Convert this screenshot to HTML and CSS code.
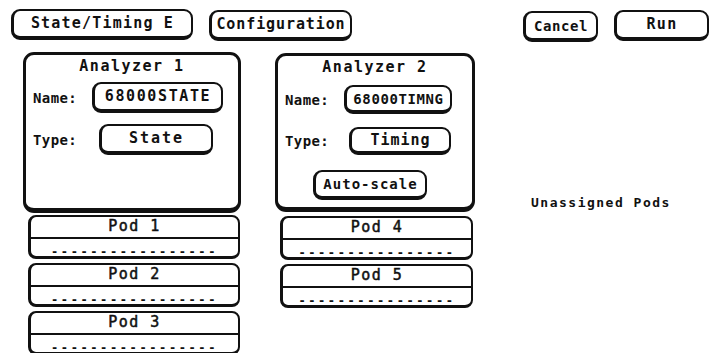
FILE: index.html
```html
<!DOCTYPE html>
<html>
<head>
<meta charset="utf-8">
<link rel="stylesheet" href="styles.css">
</head>
<body>
<div class="topbar">
  <div class="btn btn-mode">State/Timing E</div>
  <div class="btn btn-config">Configuration</div>
  <div class="btn btn-cancel">Cancel</div>
  <div class="btn btn-run">Run</div>
</div>
<div class="main">
  <div class="col col1">
    <div class="analyzer a1">
      <div class="a-title">Analyzer 1</div>
      <div class="row row-name">
        <span class="label">Name:</span>
        <div class="field f1-name">68000STATE</div>
      </div>
      <div class="row row-type">
        <span class="label">Type:</span>
        <div class="field f1-type">State</div>
      </div>
    </div>
    <div class="pods">
      <div class="pod"><div class="pod-title">Pod 1</div><div class="pod-bits">-----------------</div></div>
      <div class="pod"><div class="pod-title">Pod 2</div><div class="pod-bits">-----------------</div></div>
      <div class="pod"><div class="pod-title">Pod 3</div><div class="pod-bits">-----------------</div></div>
    </div>
  </div>
  <div class="col col2">
    <div class="analyzer a2">
      <div class="a-title">Analyzer 2</div>
      <div class="row row-name">
        <span class="label">Name:</span>
        <div class="field f2-name">68000TIMNG</div>
      </div>
      <div class="row row-type">
        <span class="label">Type:</span>
        <div class="field f2-type">Timing</div>
      </div>
      <div class="auto-row">
        <div class="field f2-auto">Auto-scale</div>
      </div>
    </div>
    <div class="pods">
      <div class="pod"><div class="pod-title">Pod 4</div><div class="pod-bits">----------------</div></div>
      <div class="pod"><div class="pod-title">Pod 5</div><div class="pod-bits">----------------</div></div>
    </div>
  </div>
  <div class="col col3">
    <div class="unassigned">Unassigned Pods</div>
  </div>
</div>
</body>
</html>
```
FILE: styles.css
```css
html, body {
  margin: 0;
  padding: 0;
  background: #fff;
  width: 711px;
  height: 353px;
  overflow: hidden;
}
body {
  font-family: "DejaVu Sans Mono", "Liberation Mono", monospace;
  font-weight: bold;
  font-size: 15px;
  color: #111;
  letter-spacing: 1.3px;
}
.topbar {
  display: flex;
  align-items: flex-start;
  padding: 9px 0 0 11px;
  height: 34px;
}
.btn {
  box-sizing: border-box;
  height: 31px;
  border: 2px solid #111;
  border-bottom-width: 4px;
  border-left-width: 3px;
  border-radius: 9px;
  display: flex;
  align-items: center;
  justify-content: center;
  line-height: 1;
  white-space: nowrap;
}
.btn-mode { width: 182px; letter-spacing: 1.2px; }
.btn-config { width: 143px; margin-left: 16px; margin-top: 1px; letter-spacing: 0.9px; }
.btn-cancel { width: 75px; margin-left: 171px; margin-top: 2px; font-size: 14px; letter-spacing: 0.6px; }
.btn-run { width: 95px; margin-left: 16px; margin-top: 1px; }

.main {
  display: flex;
  align-items: flex-start;
  padding-left: 23px;
  margin-top: 9px;
}
.col { display: flex; flex-direction: column; }
.col1 { width: 218px; }
.col2 { width: 200px; margin-left: 34px; }
.col3 { margin-left: 56px; padding-top: 143px; }

.analyzer {
  box-sizing: border-box;
  height: 161px;
  border: 3px solid #111;
  border-bottom-width: 5px;
  border-radius: 11px;
  display: flex;
  flex-direction: column;
}
.a2 { height: 159px; margin-top: 1px; }
.a-title {
  text-align: center;
  line-height: 18px;
  padding-top: 2px;
  letter-spacing: 1.5px;
}
.row {
  display: flex;
  align-items: center;
  padding-left: 7px;
}
.row-name { margin-top: 7px; }
.row-type { margin-top: 11px; }
.a2 .row-name { margin-top: 9px; }
.a2 .row-type { margin-top: 13px; }
.label {
  width: 51px;
  font-size: 14px;
  letter-spacing: 0.4px;
}
.field {
  box-sizing: border-box;
  height: 31px;
  border: 2px solid #111;
  border-bottom-width: 4px;
  border-left-width: 3px;
  border-radius: 9px;
  display: flex;
  align-items: center;
  justify-content: center;
  white-space: nowrap;
  line-height: 1;
}
.f1-name { width: 131px; margin-left: 8px; letter-spacing: 1.6px; }
.f1-type { width: 114px; margin-left: 15px; letter-spacing: 2px; }
.f2-name { width: 108px; height: 29px; margin-left: 8px; font-size: 14px; letter-spacing: 0.6px; }
.f2-type { width: 102px; height: 28px; margin-left: 13px; letter-spacing: 1px; }
.auto-row {
  display: flex;
  justify-content: center;
  margin-top: 15px;
  padding-right: 10px;
}
.f2-auto { width: 114px; height: 30px; font-size: 14px; letter-spacing: 1px; }

.pods {
  display: flex;
  flex-direction: column;
  gap: 4px;
  margin-left: 5px;
  margin-top: 2px;
}
.col1 .pods { width: 212px; }
.col2 .pods { width: 193px; margin-top: 4px; }
.pod {
  box-sizing: border-box;
  height: 44px;
  border: 2px solid #111;
  border-bottom-width: 3px;
  border-left-width: 3px;
  border-radius: 8px;
  display: flex;
  flex-direction: column;
}
.pod-title {
  height: 20px;
  line-height: 19px;
  text-align: center;
  border-bottom: 2px solid #111;
  font-weight: normal;
  -webkit-text-stroke: 0.5px #111;
  letter-spacing: 1.5px;
}
.pod-bits {
  flex: 1;
  text-align: center;
  font-size: 12px;
  line-height: 6px;
  padding-top: 10px;
  letter-spacing: 2.6px;
  white-space: nowrap;
}
.unassigned {
  font-size: 13px;
  letter-spacing: 1.5px;
  white-space: nowrap;
}
```
